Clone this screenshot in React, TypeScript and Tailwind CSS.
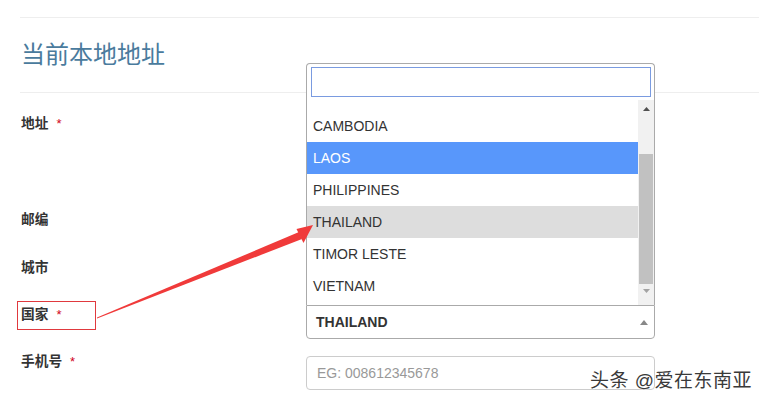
import React from 'react';

const font = { fontFamily: '"Liberation Sans", "Noto Sans CJK SC", sans-serif' };

const countries = [
  { name: 'CAMBODIA', state: '' },
  { name: 'LAOS', state: 'active' },
  { name: 'PHILIPPINES', state: '' },
  { name: 'THAILAND', state: 'selected' },
  { name: 'TIMOR LESTE', state: '' },
  { name: 'VIETNAM', state: '' },
];

const Label = ({ text, required }: { text: string; required?: boolean }) => (
  <div className="flex items-center h-[20px] text-[13.7px] font-bold text-[#333]">
    {text}
    {required && <span className="ml-[8px] text-[#d0021b] font-normal text-[13px]">*</span>}
  </div>
);

const CountryDropdown = () => (
  <div className="absolute left-[306px] top-[63px] w-[349px] h-[242px] bg-white border border-b-0 border-[#aaa] rounded-t-[4px] flex flex-col">
    <div className="px-[4px] pt-[3px]">
      <input className="block w-[340px] h-[30px] border border-[#7a9be0] outline-none" />
    </div>
    <div className="flex flex-1 mt-[3px] overflow-hidden">
      <ul className="flex-1 pt-[10px] text-[14px] text-[#333]">
        {countries.map((c) => (
          <li
            key={c.name}
            className={`h-[32px] flex items-center pl-[6px] ${
              c.state === 'active'
                ? 'bg-[#5897fb] text-white'
                : c.state === 'selected'
                ? 'bg-[#ddd]'
                : ''
            }`}
          >
            {c.name}
          </li>
        ))}
      </ul>
      {/* scrollbar */}
      <div className="w-[16px] bg-[#f1f1f1] flex flex-col items-center">
        <div className="h-[17px] flex items-center justify-center">
          <svg width="7" height="4" viewBox="0 0 7 4"><path d="M0 4L3.5 0L7 4Z" fill="#505050" /></svg>
        </div>
        <div className="w-[14px] h-[130px] mt-[37px] bg-[#c1c1c1]" />
        <div className="h-[14px] flex items-center justify-center">
          <svg width="7" height="4" viewBox="0 0 7 4"><path d="M0 0L3.5 4L7 0Z" fill="#a3a3a3" /></svg>
        </div>
      </div>
    </div>
  </div>
);

const Arrow = () => (
  <svg className="absolute left-0 top-0 pointer-events-none" width="759" height="403">
    <polygon points="97,317.6 299,232 302,239 97,318.6" fill="#f03a3a" />
    <polygon points="313,225 296.5,229 303.5,243" fill="#f03a3a" />
  </svg>
);

export default function App() {
  return (
    <div className="relative w-[759px] h-[403px] overflow-hidden bg-white" style={font}>
      <div className="pl-[20px] pt-[17px]">
        <div className="border-t border-[#eee] h-[75px] pt-[22px]">
          <h1 className="text-[24px] leading-[30px] text-[#4a7b9d] pl-[1px]">当前本地地址</h1>
        </div>
        <div className="border-t border-[#eee]">
          <div className="h-[103px] pt-[21px] pl-[1px]">
            <Label text="地址" required />
          </div>
          <div className="h-[49px] pt-[14px] pl-[1px]">
            <Label text="邮编" />
          </div>
          <div className="h-[49px] pt-[13px] pl-[1px]">
            <Label text="城市" />
          </div>
          <div className="h-[52px] flex">
            <div className="w-[286px] pt-[7px]">
              {/* red annotation box */}
              <div className="-ml-[3px] w-[79px] h-[29px] bg-[#e0393e] p-[1px]">
                <div className="w-full h-full bg-white pl-[3px] pt-[3px]">
                  <Label text="国家" required />
                </div>
              </div>
            </div>
            <div className="pt-[11px]">
              <div className="w-[349px] h-[34px] border border-[#aaa] rounded-b-[4px] flex items-center justify-between pl-[9px] pr-[6px]">
                <span className="text-[14px] font-bold text-[#333]">THAILAND</span>
                <svg width="8" height="5" viewBox="0 0 8 5"><path d="M0 5L4 0L8 5Z" fill="#888" /></svg>
              </div>
            </div>
          </div>
          <div className="flex">
            <div className="w-[286px] pt-[6px] pl-[1px]">
              <Label text="手机号" required />
            </div>
            <div className="pt-[10px]">
              <input
                placeholder="EG: 008612345678"
                className="w-[349px] h-[34px] border border-[#ccc] rounded-[4px] px-[10px] text-[14px] text-[#555] placeholder:text-[#999] outline-none"
              />
            </div>
          </div>
        </div>
      </div>

      <CountryDropdown />
      <Arrow />

      <div
        className="absolute left-[590px] top-[367px] text-[19px] text-[#3a3a3a] tracking-[0.5px]"
        style={{ textShadow: '0 0 2px #fff, 0 0 2px #fff' }}
      >
        头条 @爱在东南亚
      </div>
    </div>
  );
}
